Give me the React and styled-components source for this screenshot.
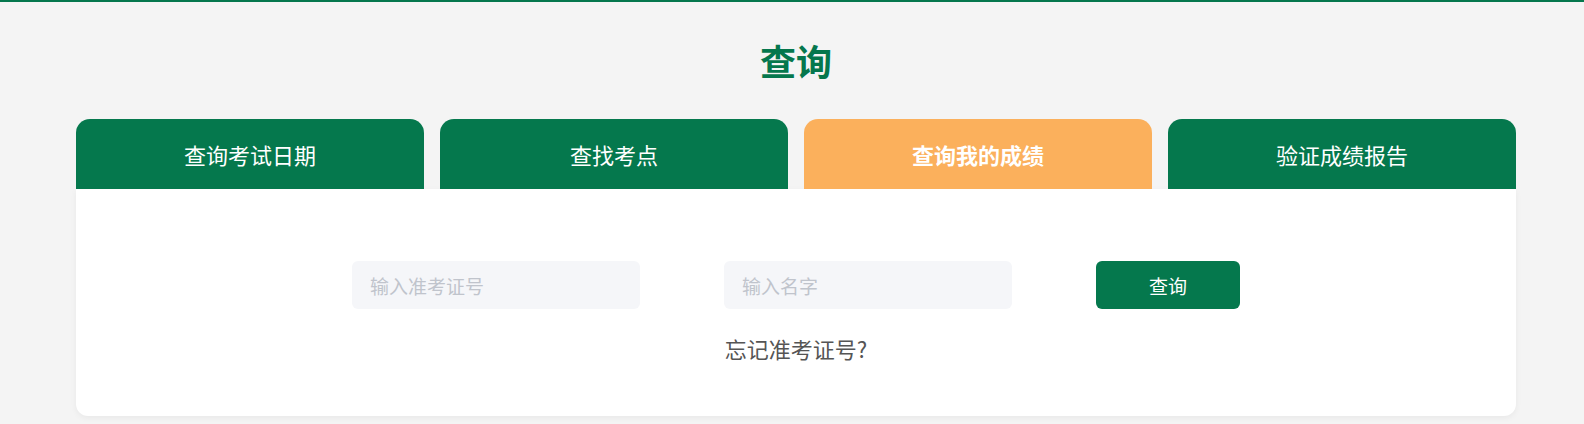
import React, { useState } from 'react';
import styled, { createGlobalStyle } from 'styled-components';

const GlobalStyle = createGlobalStyle`
  body {
    margin: 0;
    padding: 0;
    background-color: #f4f4f4;
    font-family: "Noto Sans CJK SC", "Noto Sans", sans-serif;
  }
`;

const Page = styled.div`
  border-top: 2px solid #05774d;
  min-height: 422px;
  padding: 38px 68px 0 76px;
  box-sizing: border-box;
`;

const Title = styled.h1`
  margin: 0 0 39px;
  text-align: center;
  font-size: 36px;
  line-height: 40px;
  font-weight: 700;
  color: #05774d;
`;

const Tabs = styled.div`
  display: grid;
  grid-template-columns: repeat(4, 1fr);
  gap: 16px;
`;

const Tab = styled.button`
  height: 70px;
  border: none;
  border-radius: 14px 14px 0 0;
  background-color: ${({ active }) => (active ? '#fbb05c' : '#05784d')};
  color: #ffffff;
  font-family: inherit;
  font-size: 22px;
  font-weight: ${({ active }) => (active ? 700 : 400)};
  cursor: pointer;
`;

const Card = styled.div`
  height: 227px;
  box-sizing: border-box;
  padding-top: 72px;
  background-color: #ffffff;
  border-radius: 0 0 12px 12px;
  box-shadow: 0 2px 6px rgba(0, 0, 0, 0.05);
  display: flex;
  flex-direction: column;
  align-items: center;
`;

const Form = styled.div`
  display: flex;
  gap: 84px;
`;

const Input = styled.input`
  width: 288px;
  height: 48px;
  box-sizing: border-box;
  padding: 0 18px;
  border: none;
  border-radius: 6px;
  background-color: #f5f6f9;
  font-family: inherit;
  font-size: 19px;
  color: #333333;
  outline: none;

  &::placeholder {
    color: #c0c4cc;
  }
`;

const SubmitButton = styled.button`
  width: 144px;
  height: 48px;
  border: none;
  border-radius: 6px;
  background-color: #05784d;
  color: #ffffff;
  font-family: inherit;
  font-size: 19px;
  cursor: pointer;
`;

const ForgotLink = styled.a`
  margin-top: 24px;
  font-size: 22px;
  line-height: 30px;
  color: #555555;
  text-decoration: none;
  cursor: pointer;
`;

const tabs = ['查询考试日期', '查找考点', '查询我的成绩', '验证成绩报告'];

const App = () => {
  const [active, setActive] = useState(2);

  return (
    <Page>
      <GlobalStyle />
      <Title>查询</Title>
      <Tabs>
        {tabs.map((label, i) => (
          <Tab key={label} active={i === active} onClick={() => setActive(i)}>
            {label}
          </Tab>
        ))}
      </Tabs>
      <Card>
        <Form>
          <Input placeholder="输入准考证号" />
          <Input placeholder="输入名字" />
          <SubmitButton>查询</SubmitButton>
        </Form>
        <ForgotLink>忘记准考证号?</ForgotLink>
      </Card>
    </Page>
  );
};

export default App;
